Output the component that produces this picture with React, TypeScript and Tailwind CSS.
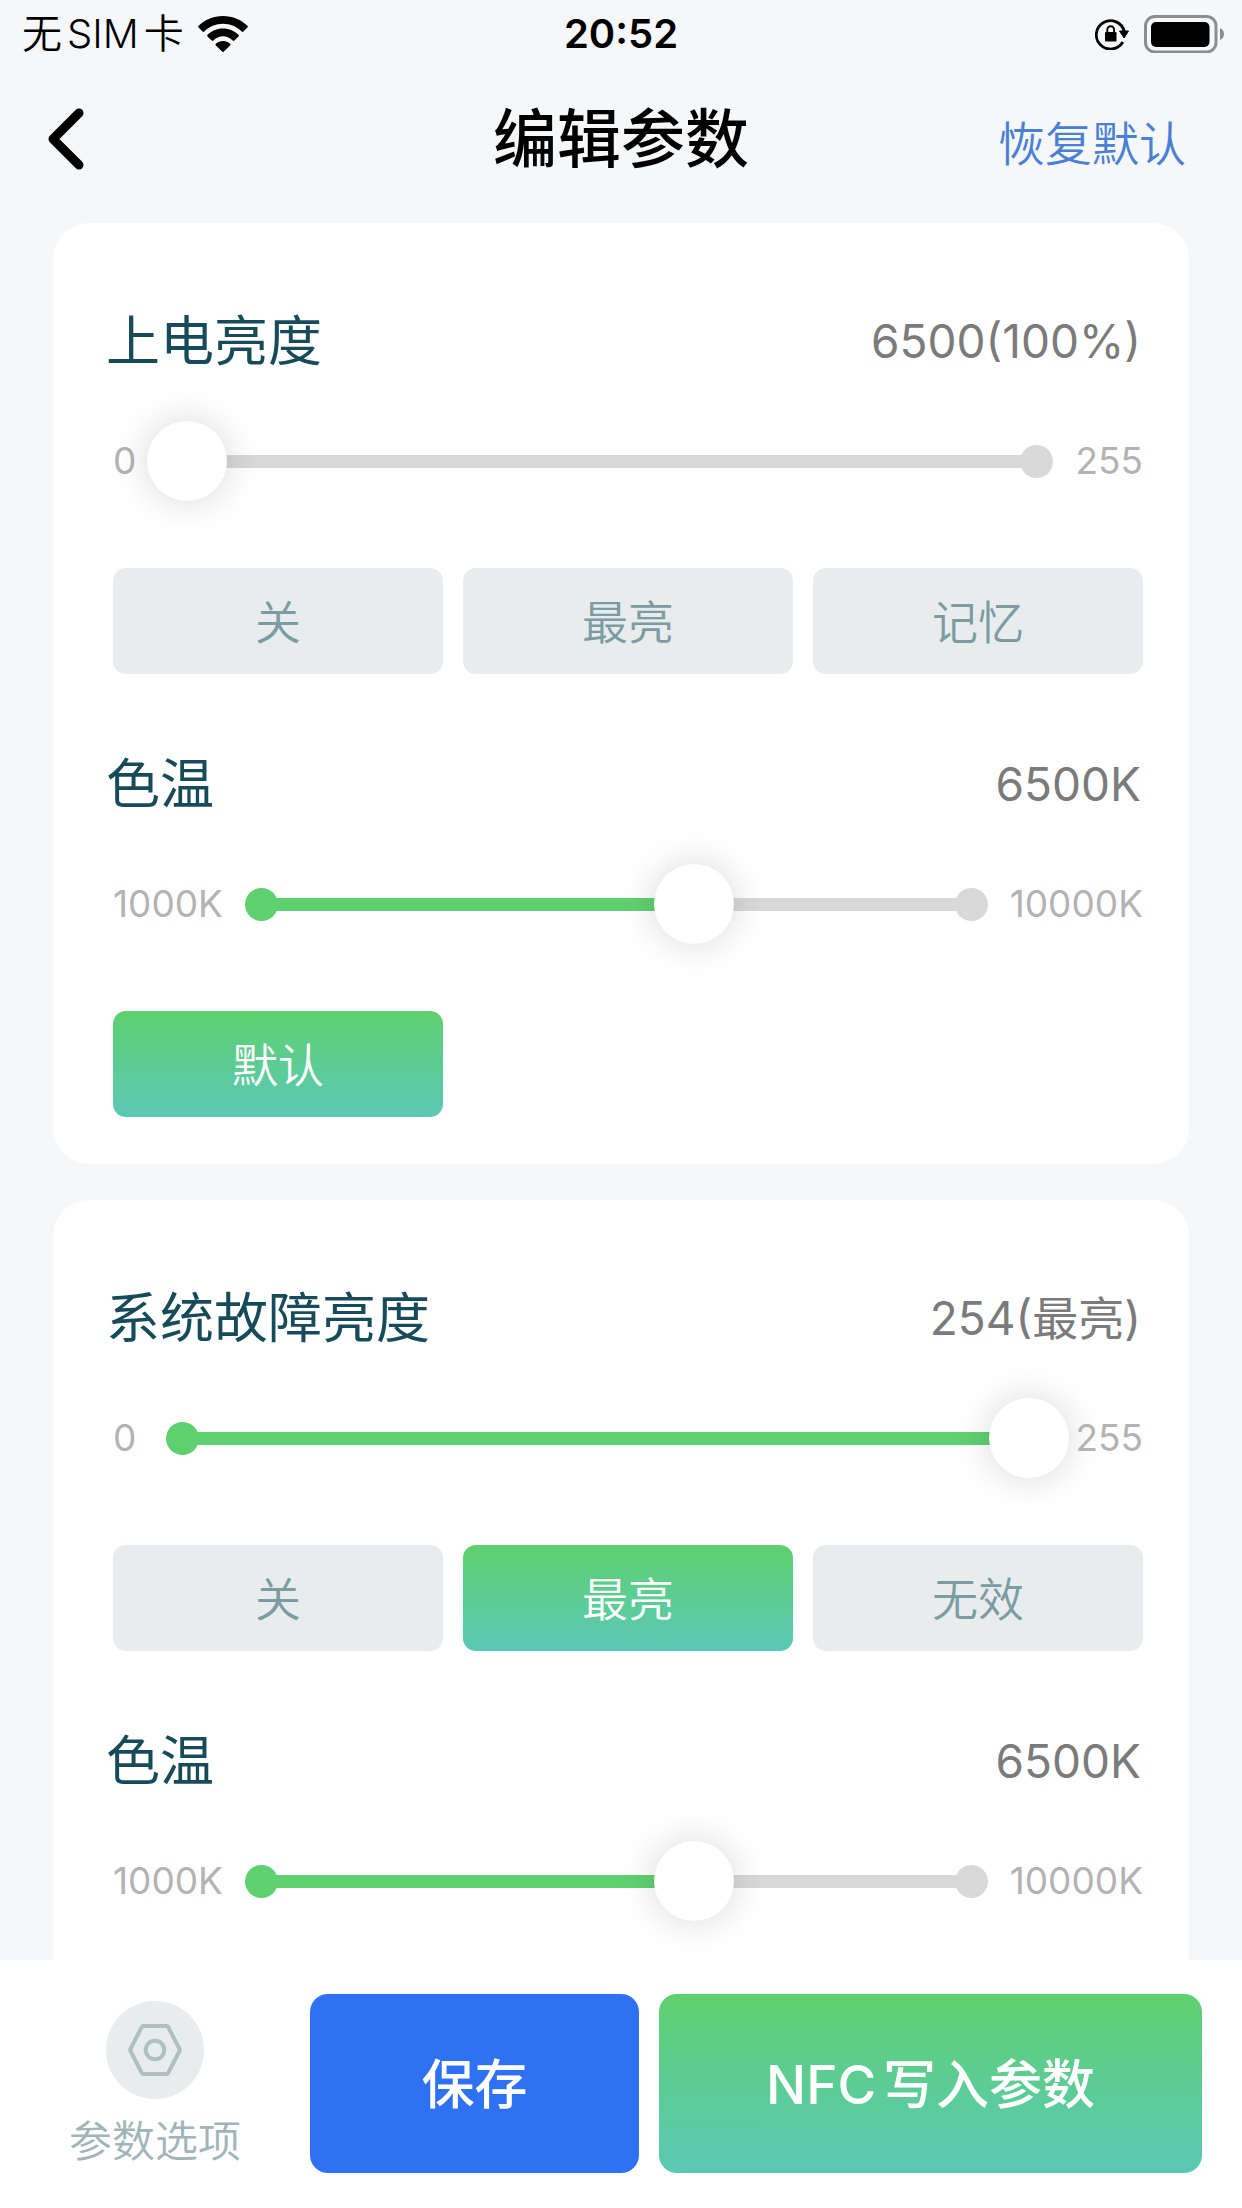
import { useId, useState } from "react";

type Option = { label: string; active?: boolean };

type SettingProps = {
  title: string;
  display: string;
  min: number;
  max: number;
  minLabel: string;
  maxLabel: string;
  initial: number;
  options?: Option[];
};

function WifiIcon() {
  return (
    <svg className="h-9 w-[50px]" viewBox="0 0 50 36" aria-hidden="true">
      <path
        d="M25 0C15.300 0 6.600 3.800 0.600 9.800a1.200 1.200 0 0 0 0 1.700l4 4a1.200 1.200 0 0 0 1.700 0C11 10.800 17.700 7.800 25 7.800s14 3 18.700 7.700a1.200 1.200 0 0 0 1.700 0l4-4a1.200 1.200 0 0 0 0-1.700C43.400 3.800 34.700 0 25 0Z"
        fill="#000"
      />
      <path
        d="M25 12.500c-6.200 0-11.700 2.500-15.500 6.300a1.200 1.200 0 0 0 0 1.700l4.200 4.100a1.200 1.200 0 0 0 1.600 0C17.800 22 21.200 20.300 25 20.300s7.200 1.700 9.700 4.300a1.200 1.200 0 0 0 1.600 0l4.200-4.100a1.200 1.200 0 0 0 0-1.700C36.700 15 31.200 12.500 25 12.500Z"
        fill="#000"
      />
      <path
        d="M25 25c-2.800 0-5.300 1-7.100 2.700a1.200 1.200 0 0 0 0 1.700l6.200 6.200a1.200 1.200 0 0 0 1.800 0l6.200-6.200a1.200 1.200 0 0 0 0-1.700C30.300 26 27.800 25 25 25Z"
        fill="#000"
      />
    </svg>
  );
}

function RotationLockIcon() {
  return (
    <svg className="h-8 w-[34px]" viewBox="0 0 34 32" aria-hidden="true">
      <path
        d="M29.300 13.500A14.200 14.200 0 1 0 27.800 24"
        fill="none"
        stroke="#000"
        strokeWidth="2.800"
      />
      <path d="M24.500 13h9l-4.400 7Z" fill="#000" stroke="#000" strokeWidth="1" strokeLinejoin="round" />
      <rect x="10" y="14" width="11.500" height="9.500" rx="1.200" fill="#000" />
      <path d="M12.300 15v-3.400a3.400 3.400 0 0 1 6.800 0V15" fill="none" stroke="#000" strokeWidth="1.900" />
    </svg>
  );
}

function BatteryIcon() {
  return (
    <svg className="h-[38px] w-20" viewBox="0 0 80 38" aria-hidden="true">
      <rect x="1.500" y="1.500" width="70.500" height="35.500" rx="9.500" fill="none" stroke="#8c8d8e" strokeWidth="3" />
      <rect x="7" y="7" width="58.500" height="25" rx="5" fill="#000" />
      <path d="M76 13c2.400.9 4 3.300 4 6s-1.600 5.100-4 6Z" fill="#8c8d8e" />
    </svg>
  );
}

function NutIcon() {
  return (
    <svg className="h-[52px] w-[54px]" viewBox="0 0 54 52" fill="none" stroke="#b0bfc2" strokeWidth="4" aria-hidden="true">
      <path
        d="M15.500 2h23a2 2 0 0 1 1.700 1L51.500 25a2 2 0 0 1 0 2L40.200 49a2 2 0 0 1-1.700 1h-23a2 2 0 0 1-1.700-1L2.500 27a2 2 0 0 1 0-2L13.800 3a2 2 0 0 1 1.700-1Z"
        strokeLinejoin="round"
      />
      <circle cx="27" cy="26" r="9.300" />
    </svg>
  );
}

function Setting({ title, display, min, max, minLabel, maxLabel, initial, options }: SettingProps) {
  const id = useId();
  const [value, setValue] = useState(initial);
  const percent = ((value - min) / (max - min)) * 100;

  return (
    <section>
      <div className="-ml-[7px] flex items-center justify-between pr-0.5">
        <label htmlFor={id} className="pt-1.5 text-[54px] leading-[66px] text-[#174b5a]">
          {title}
        </label>
        <output htmlFor={id} className="pt-1 text-[46px] leading-[68px] text-[#7b7b7b]">
          {display}
        </output>
      </div>
      <div className="mt-[46px] flex items-center gap-[3px] text-[37px] leading-[80px] text-[#b3b3b3]">
        <span className="min-w-[31px]">{minLabel}</span>
        <div className="grid flex-1 items-center">
          <div className="mx-[19px] flex items-center [grid-area:1/1]">
            <span className={value > min ? "size-[33px] rounded-full bg-[#5fd070]" : "size-[33px] rounded-full bg-[#d8d8d8]"} />
            <span className="-mx-1 h-[13px] flex-1 bg-[#d8d8d8]">
              <span className="block h-full bg-[#5fd070]" style={{ width: `${percent}%` }} />
            </span>
            <span className="size-[33px] rounded-full bg-[#d8d8d8]" />
          </div>
          <input
            id={id}
            type="range"
            min={min}
            max={max}
            value={value}
            onChange={(e) => setValue(Number(e.target.value))}
            className="h-20 w-full appearance-none bg-transparent outline-none [grid-area:1/1] [&::-webkit-slider-thumb]:size-20 [&::-webkit-slider-thumb]:appearance-none [&::-webkit-slider-thumb]:rounded-full [&::-webkit-slider-thumb]:bg-white [&::-webkit-slider-thumb]:shadow-[0_0_36px_rgba(0,0,0,0.16)]"
          />
        </div>
        <span>{maxLabel}</span>
      </div>
      {options && (
        <div className="mt-[67px] grid grid-cols-3 gap-5">
          {options.map((o) => (
            <button
              key={o.label}
              type="button"
              aria-pressed={!!o.active}
              className={
                o.active
                  ? "h-[106px] rounded-[13px] bg-linear-to-b from-[#5fd06d] to-[#5bc8b5] pt-0.5 text-[46px] font-[350] text-white"
                  : "h-[106px] rounded-[13px] bg-[#e8ecec] pt-0.5 text-[46px] font-[350] text-[#7b9ca3]"
              }
            >
              {o.label}
            </button>
          ))}
        </div>
      )}
    </section>
  );
}

export default function App() {
  return (
    <div
      lang="zh-CN"
      className="flex h-screen flex-col overflow-hidden bg-[#f5f7f9] font-['Inter','Noto_Sans_CJK_SC',sans-serif] [text-autospace:normal]"
    >
      <div className="grid h-[68px] grid-cols-[1fr_auto_1fr] items-center px-[18px] text-[40px] text-black">
        <div className="flex items-center gap-3.5 pl-1">
          <span className="font-[350]">无SIM卡</span>
          <WifiIcon />
        </div>
        <time className="font-semibold">20:52</time>
        <div className="flex items-center justify-end gap-[15px]">
          <RotationLockIcon />
          <BatteryIcon />
        </div>
      </div>

      <header className="grid h-[155px] grid-cols-[1fr_auto_1fr] items-center px-12 pb-3.5">
        <button type="button" aria-label="返回" className="justify-self-start">
          <svg className="h-[62px] w-9" viewBox="0 0 36 62" fill="none" aria-hidden="true">
            <path
              d="M31 5 5 31 31 57"
              stroke="#000"
              strokeWidth="9"
              strokeLinecap="round"
              strokeLinejoin="round"
            />
          </svg>
        </button>
        <h1 className="text-[64px] font-medium text-black">编辑参数</h1>
        <button type="button" className="justify-self-end pt-3 pr-2 text-[47px] font-[350] text-[#4a80d4]">
          恢复默认
        </button>
      </header>

      <main className="flex flex-1 flex-col gap-9 overflow-hidden px-[53px]">
        <div className="flex flex-col gap-[72px] rounded-[36px] bg-white pt-20 pr-[46px] pb-[47px] pl-[60px]">
          <Setting
            title="上电亮度"
            display="6500(100%)"
            min={0}
            max={255}
            minLabel="0"
            maxLabel="255"
            initial={0}
            options={[{ label: "关" }, { label: "最亮" }, { label: "记忆" }]}
          />
          <Setting
            title="色温"
            display="6500K"
            min={1000}
            max={10000}
            minLabel="1000K"
            maxLabel="10000K"
            initial={6500}
            options={[{ label: "默认", active: true }]}
          />
        </div>
        <div className="flex flex-1 flex-col gap-[72px] rounded-t-[36px] bg-white pt-20 pr-[46px] pl-[60px]">
          <Setting
            title="系统故障亮度"
            display="254(最亮)"
            min={0}
            max={255}
            minLabel="0"
            maxLabel="255"
            initial={254}
            options={[{ label: "关" }, { label: "最亮", active: true }, { label: "无效" }]}
          />
          <Setting
            title="色温"
            display="6500K"
            min={1000}
            max={10000}
            minLabel="1000K"
            maxLabel="10000K"
            initial={6500}
          />
        </div>
      </main>

      <footer className="flex items-start gap-5 bg-white pt-[34px] pr-10 pb-[35px]">
        <button type="button" className="flex w-[290px] flex-col items-center gap-2 pt-[7px] pl-5">
          <span className="flex size-[98px] items-center justify-center rounded-full bg-[#e8ecec]">
            <NutIcon />
          </span>
          <span className="pt-0.5 text-[43px] leading-[64px] font-[350] text-[#9fb5ba]">参数选项</span>
        </button>
        <button type="button" className="h-[179px] flex-[329] rounded-[18px] bg-[#2f71f3] pt-1 text-[53px] font-[450] text-white">
          保存
        </button>
        <button
          type="button"
          className="h-[179px] flex-[543] rounded-[18px] bg-linear-to-b from-[#5fd06d] to-[#5bc8b5] pt-1 text-[53px] font-[450] text-white"
        >
          NFC写入参数
        </button>
      </footer>
    </div>
  );
}
